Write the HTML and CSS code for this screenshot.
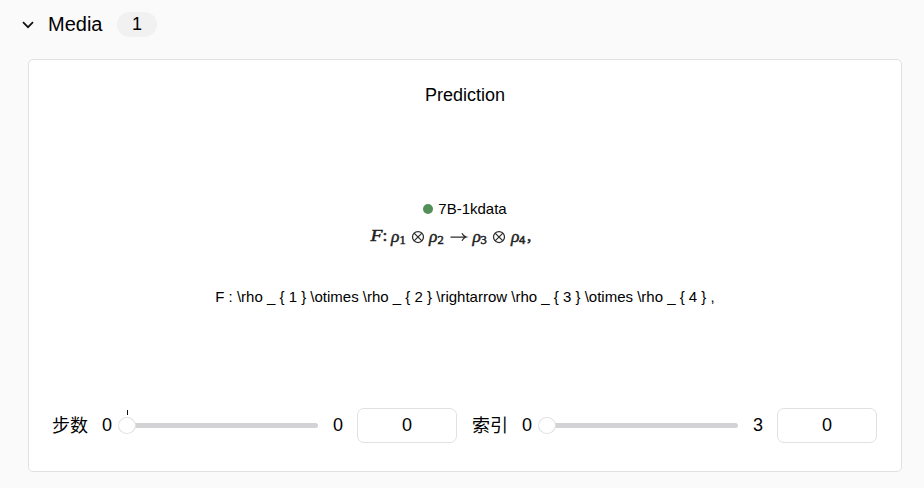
FILE: index.html
```html
<!DOCTYPE html>
<html lang="zh-CN">
<head>
<meta charset="utf-8">
<title>Media</title>
<link rel="stylesheet" href="styles.css">
</head>
<body>
<section class="section">
  <header class="section-header">
    <svg class="chevron" viewBox="0 0 12 8" width="12" height="8"><path d="M1 1.2 6 6.2 11 1.2"/></svg>
    <h2 class="section-title">Media</h2>
    <span class="count">1</span>
  </header>
  <article class="card">
    <h3 class="card-title">Prediction</h3>
    <div class="media">
      <div class="legend"><span class="dot"></span><span class="run">7B-1kdata</span></div>
      <svg class="formula" viewBox="0 0 180 30" width="180" height="30">
        <g class="glyphs">
          <text x="10.500" y="20" textLength="12" lengthAdjust="spacingAndGlyphs">F</text>
          <text class="upright" x="22.500" y="20">:</text>
          <text x="31" y="20.500">ρ</text><text class="sub" x="39.500" y="23">1</text>
          <text x="69" y="20.500">ρ</text><text class="sub" x="77.500" y="23">2</text>
          <text x="112.500" y="20.500">ρ</text><text class="sub" x="120.500" y="23">3</text>
          <text x="151" y="20.500">ρ</text><text class="sub" x="159" y="23">4</text>
          <text class="upright" x="167" y="20">,</text>
        </g>
        <g class="ops">
          <circle cx="58" cy="16" r="5.5"/><path d="m54.1 12.1 7.8 7.8m0-7.8-7.8 7.8"/>
          <circle cx="139" cy="16" r="5.5"/><path d="m135.1 12.1 7.8 7.8m0-7.8-7.8 7.8"/>
          <path d="M90.500 16h15.500M102 12.200q1.300 3 4.300 3.800-3 .8-4.300 3.800"/>
        </g>
      </svg>
      <p class="caption">F : \rho _ { 1 } \otimes \rho _ { 2 } \rightarrow \rho _ { 3 } \otimes \rho _ { 4 } ,</p>
    </div>
    <div class="controls">
      <div class="control">
        <span class="label">步数</span>
        <span class="min">0</span>
        <div class="slider"><span class="tick"></span><span class="handle"></span></div>
        <span class="max">0</span>
        <input class="value" type="text" value="0">
      </div>
      <div class="control">
        <span class="label">索引</span>
        <span class="min">0</span>
        <div class="slider"><span class="handle"></span></div>
        <span class="max">3</span>
        <input class="value" type="text" value="0">
      </div>
    </div>
  </article>
</section>
</body>
</html>
```
FILE: styles.css
```css
* { box-sizing: border-box; }
body {
  margin: 0;
  height: 488px;
  overflow: hidden;
  background: #fafafa;
  color: #000;
  font-family: "Liberation Sans", "Noto Sans CJK SC", sans-serif;
}
h2, h3, p { margin: 0; font-weight: 400; }
.section { padding: 12px 22px 0; }
.section-header { display: flex; align-items: center; height: 25px; }
.chevron { fill: none; stroke: #111; stroke-width: 1.7; }
.section-title { margin-left: 14px; padding-bottom: 2px; width: 69px; font-size: 20px; line-height: 24px; }
.count {
  width: 40px;
  height: 25px;
  border-radius: 13px;
  background: #f1f1f1;
  font-size: 18px;
  line-height: 24px;
  text-align: center;
}
.card {
  display: flex;
  flex-direction: column;
  height: 413px;
  margin: 22px 0 0 6px;
  width: 874px;
  padding: 23px 24px 28px 23px;
  border: 1px solid #e1e1e1;
  border-radius: 5px;
  background: #fff;
}
.card-title { padding-left: 1px; font-size: 18px; line-height: 24px; text-align: center; }
.media { flex: 1; padding-top: 93px; }
.legend {
  display: flex;
  align-items: center;
  justify-content: center;
  gap: 5px;
  height: 18px;
  padding-left: 1px;
  font-size: 15px;
}
.run { padding-bottom: 2px; }
.dot { width: 10px; height: 10px; border-radius: 50%; background: #529058; }
.formula { display: block; margin: 3px 0 0 308px; }
.glyphs { fill: #222; stroke: #222; stroke-width: .5; font: italic 17.5px "Liberation Serif", serif; }
.glyphs .upright { font-style: normal; }
.glyphs .sub { font-style: normal; font-size: 12.5px; }
.ops { fill: none; stroke: #2c2c2c; stroke-width: 1.25; }
.caption { margin-top: 36px; padding-left: 1px; font-size: 15px; line-height: 20px; text-align: center; white-space: nowrap; }
.controls { display: flex; gap: 15px; height: 35px; }
.control { display: flex; align-items: center; width: 405px; font-size: 18px; line-height: 24px; }
.label { width: 50px; }
.min { width: 10px; padding-bottom: 2px; }
.slider { position: relative; width: 191px; height: 5px; margin-left: 15px; border-radius: 3px; background: #d3d3d5; }
.handle {
  position: absolute;
  left: -9px;
  top: -6px;
  width: 18px;
  height: 17px;
  border: 1px solid #e1e1e1;
  border-radius: 50%;
  background: #fff;
}
.tick { position: absolute; left: 0; top: -13px; width: 1px; height: 5px; background: #111; }
.max { width: 10px; margin-left: 15px; padding-bottom: 2px; }
.value {
  width: 100px;
  height: 35px;
  margin: 0 0 0 14px;
  padding: 0;
  border: 1px solid #e1e1e1;
  border-radius: 7px;
  background: #fff;
  color: #000;
  font: inherit;
  text-align: center;
}
```
